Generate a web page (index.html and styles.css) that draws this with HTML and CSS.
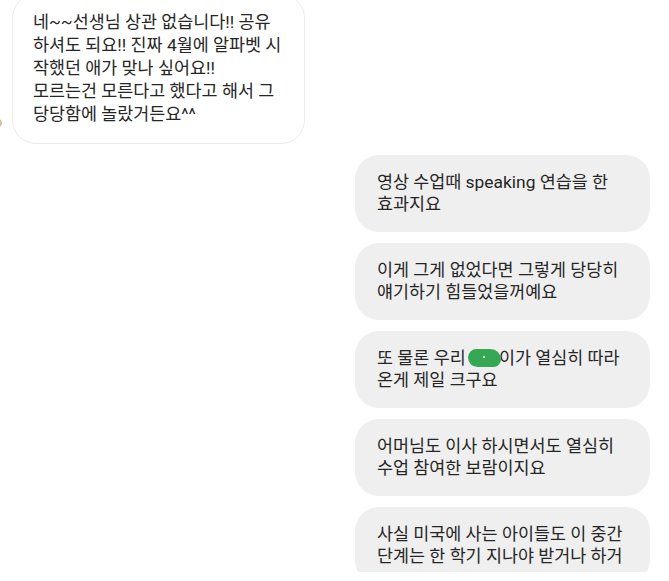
FILE: index.html
```html
<!DOCTYPE html>
<html lang="ko">
<head>
<meta charset="utf-8">
<link rel="stylesheet" href="styles.css">
</head>
<body>
<div class="chat">
  <div class="row row-in">
    <div class="avatar"></div>
    <div class="bubble bubble-in">네~~선생님 상관 없습니다!! 공유<br>하셔도 되요!! 진짜 4월에 알파벳 시<br>작했던 애가 맞나 싶어요!!<br>모르는건 모른다고 했다고 해서 그<br>당당함에 놀랐거든요^^</div>
  </div>
  <div class="row row-out">
    <div class="bubble bubble-out">영상 수업때 speaking 연습을 한<br>효과지요</div>
  </div>
  <div class="row row-out">
    <div class="bubble bubble-out">이게 그게 없었다면 그렇게 당당히<br>얘기하기 힘들었을꺼예요</div>
  </div>
  <div class="row row-out">
    <div class="bubble bubble-out">또 물론 우리 <span class="mask"><span class="dot"></span></span>이가 열심히 따라<br>온게 제일 크구요</div>
  </div>
  <div class="row row-out">
    <div class="bubble bubble-out">어머님도 이사 하시면서도 열심히<br>수업 참여한 보람이지요</div>
  </div>
  <div class="row row-out">
    <div class="bubble bubble-out">사실 미국에 사는 아이들도 이 중간<br>단계는 한 학기 지나야 받거나 하거</div>
  </div>
</div>
</body>
</html>
```
FILE: styles.css
```css
html, body {
  margin: 0;
  padding: 0;
  background: #ffffff;
  overflow: hidden;
}
.chat {
  width: 669px;
  height: 572px;
  overflow: hidden;
  display: flex;
  flex-direction: column;
  gap: 11px;
  font-family: Roboto, "Noto Sans CJK KR", sans-serif;
  font-size: 17.4px;
  line-height: 22px;
  color: #262626;
}
.row {
  display: flex;
  position: relative;
}
.row-in {
  margin-top: -6px;
  padding-left: 12px;
}
.row-out {
  justify-content: flex-end;
  padding-right: 19px;
}
.avatar {
  position: absolute;
  left: -28px;
  top: 121px;
  width: 30px;
  height: 16px;
  border-radius: 50%;
  background: #d4c090;
}
.bubble {
  border-radius: 24px;
  white-space: nowrap;
  box-sizing: border-box;
  flex-shrink: 0;
}
.bubble-in {
  width: 293px;
  background: #ffffff;
  border: 1px solid #ececec;
  padding: 16px 20px 17px 20px;
  line-height: 23px;
}
.bubble-out {
  width: 295px;
  background: #efefef;
  padding: 16px 22px 17px 22px;
}
.mask {
  display: inline-block;
  width: 33px;
  height: 18px;
  vertical-align: -3px;
  border-radius: 9px 11px 8px 10px;
  background: #36a853;
  position: relative;
  margin-left: -2px;
  margin-right: -2px;
}
.dot {
  position: absolute;
  left: 15px;
  top: 7px;
  width: 2px;
  height: 2px;
  background: #ffffff;
  border-radius: 1px;
}
```
